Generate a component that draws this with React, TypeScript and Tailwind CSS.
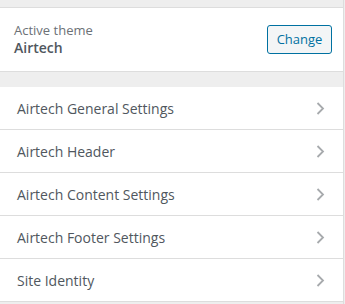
import React from "react";

const items = [
  "Airtech General Settings",
  "Airtech Header",
  "Airtech Content Settings",
  "Airtech Footer Settings",
  "Site Identity",
];

function Chevron() {
  return (
    <svg width="9" height="13" viewBox="0 0 9 13" className="shrink-0">
      <path d="M1.5 1 L7 6.5 L1.5 12" fill="none" stroke="#a7aaad" strokeWidth="1.8" />
    </svg>
  );
}

export default function App() {
  return (
    <div
      className="w-[345px] h-[304px] bg-[#eeeeee] overflow-hidden"
      style={{ fontFamily: '"Open Sans", "Noto Sans", sans-serif' }}
    >
      <div className="w-[344px] border-r border-[#dddddd] h-full">
        <div className="h-[7px]" />
        <div className="bg-white border-y border-[#dddddd] h-[65px] flex items-center justify-between pl-[14px] pr-[11px]">
          <div className="flex flex-col">
            <span className="text-[13px] leading-[17px] text-[#6c7176]">Active theme</span>
            <span className="text-[14px] leading-[18px] font-semibold text-[#50575e]">Airtech</span>
          </div>
          <button className="h-[29px] w-[65px] border border-[#0071a1] rounded-[3px] bg-[#f3f5f6] text-[#0071a1] text-[13px]">
            Change
          </button>
        </div>
        <div className="h-[15px]" />
        <div className="bg-white">
          {items.map((t) => (
            <div
              key={t}
              className="h-[43px] border-b border-[#dddddd] flex items-center justify-between pl-[17px] pr-[18px]"
            >
              <span className="text-[14px] text-[#50575e] font-medium">{t}</span>
              <Chevron />
            </div>
          ))}
        </div>
      </div>
    </div>
  );
}
